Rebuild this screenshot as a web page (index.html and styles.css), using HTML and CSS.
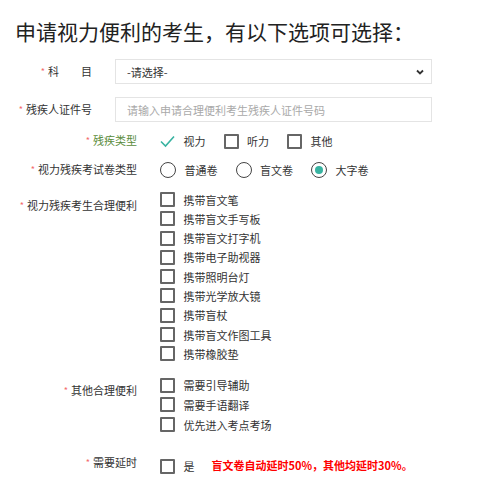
FILE: index.html
```html
<!DOCTYPE html>
<html lang="zh-CN">
<head>
    <meta charset="UTF-8">
    <title>视力便利申请</title>
    <link rel="stylesheet" href="styles.css">
</head>
<body>
    <div class="page">
        <h1 class="title">申请视力便利的考生，有以下选项可选择：</h1>

        <div class="row row-subject">
            <label class="label label-short"><i class="req">*</i>科&emsp;&emsp;目</label>
            <div class="select-wrap">
                <select class="field select">
                    <option>-请选择-</option>
                </select>
                <svg class="chevron" width="8" height="6" viewBox="0 0 8 6">
                    <polyline points="1,1.5 4,4.5 7,1.5" fill="none" stroke="#333" stroke-width="1.8"/>
                </svg>
            </div>
        </div>

        <div class="row row-idcard">
            <label class="label label-short"><i class="req">*</i>残疾人证件号</label>
            <input type="text" class="field" placeholder="请输入申请合理便利考生残疾人证件号码">
        </div>

        <div class="row row-type">
            <label class="label label-long label-green"><i class="req">*</i>残疾类型</label>
            <div class="controls inline">
                <span class="opt">
                    <svg class="tick" width="15" height="15" viewBox="0 0 15 15">
                        <polyline points="1,7.5 5.5,12 14,2.5" fill="none" stroke="#38b3a1" stroke-width="1.6"/>
                    </svg>视力
                </span>
                <span class="opt"><span class="box"></span>听力</span>
                <span class="opt"><span class="box"></span>其他</span>
            </div>
        </div>

        <div class="row row-paper">
            <label class="label label-long"><i class="req">*</i>视力残疾考试卷类型</label>
            <div class="controls inline">
                <span class="opt"><span class="radio"></span>普通卷</span>
                <span class="opt"><span class="radio"></span>盲文卷</span>
                <span class="opt"><span class="radio checked"></span>大字卷</span>
            </div>
        </div>

        <div class="row row-aids">
            <label class="label label-long label-low"><i class="req">*</i>视力残疾考生合理便利</label>
            <div class="controls list">
                <span class="opt"><span class="box"></span>携带盲文笔</span>
                <span class="opt"><span class="box"></span>携带盲文手写板</span>
                <span class="opt"><span class="box"></span>携带盲文打字机</span>
                <span class="opt"><span class="box"></span>携带电子助视器</span>
                <span class="opt"><span class="box"></span>携带照明台灯</span>
                <span class="opt"><span class="box"></span>携带光学放大镜</span>
                <span class="opt"><span class="box"></span>携带盲杖</span>
                <span class="opt"><span class="box"></span>携带盲文作图工具</span>
                <span class="opt"><span class="box"></span>携带橡胶垫</span>
            </div>
        </div>

        <div class="row row-other">
            <label class="label label-long label-low"><i class="req">*</i>其他合理便利</label>
            <div class="controls list">
                <span class="opt"><span class="box"></span>需要引导辅助</span>
                <span class="opt"><span class="box"></span>需要手语翻译</span>
                <span class="opt"><span class="box"></span>优先进入考点考场</span>
            </div>
        </div>

        <div class="row row-delay">
            <label class="label label-long"><i class="req">*</i>需要延时</label>
            <div class="controls inline delay">
                <span class="opt"><span class="box"></span>是</span>
                <span class="notice">盲文卷自动延时50%，其他均延时30%。</span>
            </div>
        </div>
    </div>
</body>
</html>
```

FILE: styles.css
```css
html, body {
    margin: 0;
    padding: 0;
    background: #fff;
    color: #333;
    font-family: "Noto Sans CJK SC", "Noto Sans", sans-serif;
    font-size: 11px;
}
.page {
    width: 496px;
}
.title {
    margin: 0;
    padding: 17px 0 0 15px;
    font-size: 21px;
    font-weight: normal;
    line-height: 28px;
    color: #222;
}
.row {
    display: flex;
    align-items: flex-start;
}
.label {
    flex-shrink: 0;
    text-align: right;
    color: #333;
    line-height: 19.3px;
}
.label-short {
    width: 92px;
    line-height: 25px;
}
.label-long {
    width: 137px;
}
.label-green {
    color: #5a8c3b;
}
.label-low {
    padding-top: 6px;
}
.req {
    font-style: normal;
    color: #f36b6b;
    font-size: 9px;
    margin-right: 3px;
    vertical-align: 1px;
}

/* text fields */
.row-subject {
    margin-top: 14px;
}
.row-idcard {
    margin-top: 13px;
}
.select-wrap {
    position: relative;
    margin-left: 23px;
}
.field {
    box-sizing: border-box;
    width: 317px;
    height: 25px;
    margin: 0;
    border: 1px solid #e4e4e4;
    background: #fff;
    color: #333;
    font-family: inherit;
    font-size: 11px;
    padding: 0 11px;
    outline: none;
}
.row-idcard .field {
    margin-left: 23px;
}
.select {
    appearance: none;
    -webkit-appearance: none;
    border-radius: 0;
}
.field::placeholder {
    color: #a9a9a9;
}
.chevron {
    position: absolute;
    right: 8px;
    top: 10px;
}

/* option groups */
.controls {
    margin-left: 23px;
    display: flex;
}
.controls.list {
    flex-direction: column;
}
.opt {
    display: flex;
    align-items: center;
    gap: 8.5px;
    height: 19.3px;
    color: #333;
    white-space: nowrap;
}
.inline .opt + .opt {
    margin-left: 18px;
}
.box {
    box-sizing: border-box;
    width: 15px;
    height: 15px;
    border: 2px solid #666;
    border-radius: 1px;
    background: #fff;
}
.tick {
    display: block;
}
.radio {
    box-sizing: border-box;
    width: 16px;
    height: 16px;
    border: 1.5px solid #444;
    border-radius: 50%;
    display: flex;
    align-items: center;
    justify-content: center;
}
.radio.checked::after {
    content: "";
    width: 8px;
    height: 8px;
    border-radius: 50%;
    background: #38b3a1;
}
.row-type {
    margin-top: 9.4px;
}
.row-paper {
    margin-top: 9.7px;
}
.row-aids {
    margin-top: 10.2px;
}
.row-other {
    margin-top: 11.8px;
}
.row-other .opt {
    height: 19.7px;
}
.row-delay {
    margin-top: 18.5px;
}
.delay {
    padding-top: 3.5px;
}
.notice {
    margin-left: 17px;
    line-height: 19.3px;
    color: #f00;
    font-weight: bold;
}
```
